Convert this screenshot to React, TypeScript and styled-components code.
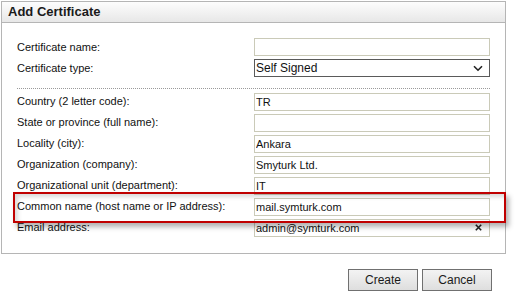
import React from "react";
import styled, { createGlobalStyle } from "styled-components";

const GlobalStyle = createGlobalStyle`
  html, body { margin: 0; padding: 0; background: #ffffff; }
  body { font-family: "Liberation Sans", Arial, sans-serif; color: #111; }
  * { box-sizing: border-box; }
`;

const Page = styled.div`
  position: relative;
  width: 517px;
  height: 295px;
  padding: 1px 0 0 1px;
`;

const Panel = styled.div`
  width: 505px;
  border: 1px solid #b5b5b5;
  background: #fff;
`;

const Header = styled.div`
  height: 21px;
  border-bottom: 1px solid #b5b5b5;
  background: linear-gradient(#fdfdfd, #e7e7e7);
  font-weight: bold;
  font-size: 13px;
  line-height: 20px;
  padding-left: 6px;
  color: #1a1a1a;
`;

const Body = styled.div`
  padding: 15px 15px 17px 15px;
`;

const FormGrid = styled.div`
  display: grid;
  grid-template-columns: 237px 236px;
  row-gap: 3px;
  align-items: center;
`;

const Label = styled.label`
  font-size: 11px;
  line-height: 18px;
  color: #111;
  white-space: nowrap;
`;

const TextInput = styled.input`
  height: 18px;
  width: 100%;
  border: 1px solid #cacab8;
  padding: 0 1px;
  font-family: "Liberation Sans", Arial, sans-serif;
  font-size: 11px;
  color: #111;
  background: #fff;
  outline: none;
`;

const InputWrap = styled.div`
  position: relative;
  height: 18px;
`;

const ClearIcon = styled.svg`
  position: absolute;
  right: 8px;
  top: 6px;
`;

const SelectBox = styled.div`
  height: 18px;
  border: 1px solid #5a5a5a;
  padding: 0 6px 0 1px;
  display: flex;
  align-items: center;
  justify-content: space-between;
  font-size: 12px;
  color: #111;
`;

const Separator = styled.div`
  margin: 11px 0 3px 0;
  border-top: 1px dotted #9a9a9a;
`;

const ButtonBar = styled.div`
  display: flex;
  justify-content: flex-end;
  gap: 4px;
  width: 505px;
  padding-right: 14px;
  margin-top: 15px;
`;

const Button = styled.button`
  width: 70px;
  height: 22px;
  border: 1px solid #707070;
  background: linear-gradient(#f3f3f3, #dedede);
  font-family: "Liberation Sans", Arial, sans-serif;
  font-size: 12px;
  color: #1a1a1a;
  padding: 0;
`;

const Highlight = styled.div`
  position: absolute;
  left: 13px;
  top: 192px;
  width: 493px;
  height: 31px;
  border: 2px solid #c00000;
  box-shadow: 3px 4px 5px rgba(0, 0, 0, 0.3), inset 3px 3px 4px rgba(0, 0, 0, 0.15);
  pointer-events: none;
`;

const fields: { label: string; value: string; clear?: boolean }[] = [
  { label: "Country (2 letter code):", value: "TR" },
  { label: "State or province (full name):", value: "" },
  { label: "Locality (city):", value: "Ankara" },
  { label: "Organization (company):", value: "Smyturk Ltd." },
  { label: "Organizational unit (department):", value: "IT" },
  { label: "Common name (host name or IP address):", value: "mail.symturk.com" },
  { label: "Email address:", value: "admin@symturk.com", clear: true },
];

export default function App() {
  return (
    <>
      <GlobalStyle />
      <Page>
        <Panel>
          <Header>Add Certificate</Header>
          <Body>
            <FormGrid>
              <Label>Certificate name:</Label>
              <TextInput defaultValue="" />
              <Label>Certificate type:</Label>
              <SelectBox>
                <span>Self Signed</span>
                <svg width="10" height="7" viewBox="0 0 10 7">
                  <path d="M1 1.2 L5 5.2 L9 1.2" fill="none" stroke="#222" strokeWidth="1.6" />
                </svg>
              </SelectBox>
            </FormGrid>
            <Separator />
            <FormGrid>
              {fields.map((f) => (
                <React.Fragment key={f.label}>
                  <Label>{f.label}</Label>
                  <InputWrap>
                    <TextInput defaultValue={f.value} />
                    {f.clear && (
                      <ClearIcon width="7" height="7" viewBox="0 0 7 7">
                        <path d="M0.8 0.8 L6.2 6.2 M6.2 0.8 L0.8 6.2" stroke="#222" strokeWidth="1.6" />
                      </ClearIcon>
                    )}
                  </InputWrap>
                </React.Fragment>
              ))}
            </FormGrid>
          </Body>
        </Panel>
        <ButtonBar>
          <Button>Create</Button>
          <Button>Cancel</Button>
        </ButtonBar>
        <Highlight />
      </Page>
    </>
  );
}
